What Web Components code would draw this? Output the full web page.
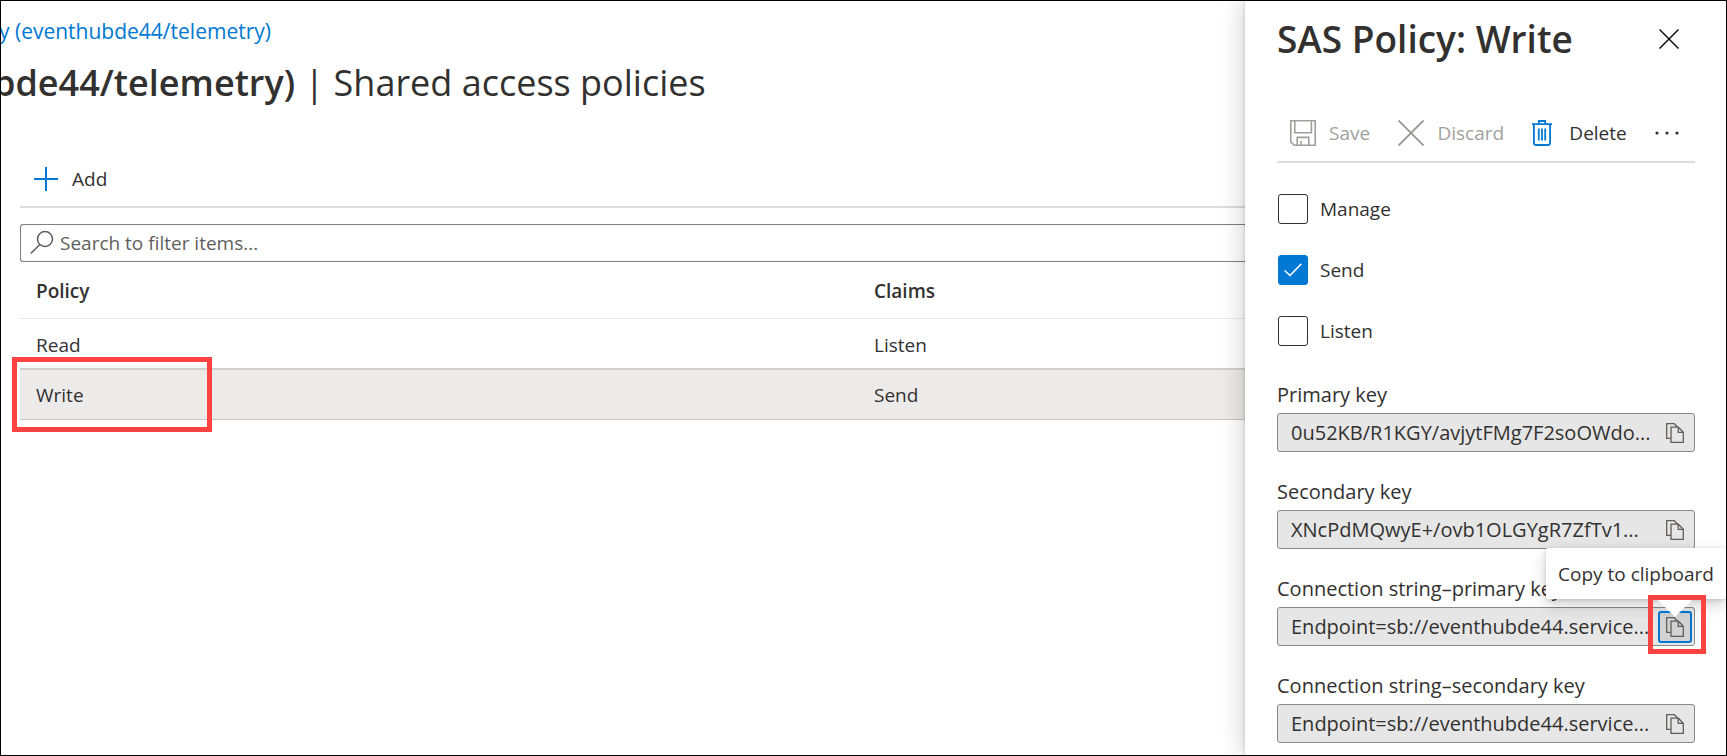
<!DOCTYPE html>
<html lang="en">
<head>
<meta charset="utf-8">
<title>Shared access policies</title>
<style>
  html, body { margin: 0; }
  body { font: 19px/28px "Open Sans", "Noto Sans", sans-serif; color: #323130; background: #fff; }
</style>
</head>
<body>
<portal-frame>
  <policy-list slot="main"></policy-list>
  <policy-panel slot="panel" heading="SAS Policy: Write">
    <claim-check label="Manage"></claim-check>
    <claim-check label="Send" checked></claim-check>
    <claim-check label="Listen"></claim-check>
    <key-field slot="keys" label="Primary key" value="0u52KB/R1KGY/avjytFMg7F2soOWdo..."></key-field>
    <key-field slot="keys" label="Secondary key" value="XNcPdMQwyE+/ovb1OLGYgR7ZfTv1..."></key-field>
    <key-field slot="keys" label="Connection string–primary key" value="Endpoint=sb://eventhubde44.service..." active></key-field>
    <key-field slot="keys" label="Connection string–secondary key" value="Endpoint=sb://eventhubde44.service..."></key-field>
  </policy-panel>
</portal-frame>

<script>
class BaseElement extends HTMLElement {
  connectedCallback() {
    if (this.shadowRoot) return;
    this.attachShadow({ mode: "open" }).innerHTML = this.render();
  }
}

customElements.define("portal-frame", class extends BaseElement {
  render() {
    return `<style>
      :host { display: grid; grid-template-columns: minmax(0, 1fr) 481px; box-sizing: border-box; min-height: 100vh; border: 1px solid #000; overflow: hidden; }
    </style><slot name="main"></slot><slot name="panel"></slot>`;
  }
});

/* Red outline drawn round the thing the reader should look at. */
customElements.define("call-out", class extends BaseElement {
  render() {
    return `<style>:host { display: block; position: absolute; box-sizing: border-box; border: 5px solid #ff4343; pointer-events: none; }</style>`;
  }
});

customElements.define("policy-list", class extends BaseElement {
  render() {
    return `<style>
      :host { display: block; overflow: hidden; padding: 16px 0 0; }
      nav { white-space: nowrap; margin-left: -2px; font-size: 21px; }
      a { color: #0078d4; text-decoration: none; }
      h1 { margin: 12px 0 41px -8px; font-size: 36px; line-height: 52px; font-weight: 400; white-space: nowrap; }
      h1 b { font-weight: 600; }
      .body { margin-left: 19px; }
      .bar { display: flex; box-sizing: border-box; height: 58px; padding-top: 2px; border-bottom: 2px solid #dcdcdc; }
      button { display: flex; align-items: center; gap: 14px; padding: 0 14px; border: 0; background: none; font: inherit; color: inherit; }
      .search { display: flex; align-items: center; gap: 6px; height: 36px; margin-top: 16px; padding-left: 9px; border: 1px solid #807e7c; border-right: 0; border-radius: 3px 0 0 3px; }
      input { flex: 1; min-width: 0; border: 0; outline: 0; padding: 0; font: inherit; color: inherit; background: none; }
      input::placeholder { color: #605e5c; opacity: 1; }
      table { width: 100%; border-collapse: separate; border-spacing: 0; table-layout: fixed; }
      th, td { box-sizing: border-box; padding: 2px 16px 0; text-align: left; font-weight: 400; position: relative; }
      th:first-child { width: 68%; }
      th + th, td + td { padding-left: 21px; }
      th { height: 57px; font-weight: 600; border-bottom: 1px solid #e8e8e8; }
      td { height: 49px; }
      .selected td { height: 52px; padding-top: 0; background: #edebe9; border-top: 2px solid #d2d0ce; border-bottom: 1px solid #c8c6c4; }
      call-out { left: -8px; top: -13px; width: 200px; height: 75px; }
    </style>
    <nav aria-label="Breadcrumb"><a href="#">y (eventhubde44/telemetry)</a></nav>
    <h1><b>bde44/telemetry)</b> | Shared access policies</h1>
    <div class="body">
      <div class="bar"><button type="button">
        <svg width="24" height="24" viewBox="0 0 24 24" fill="none" stroke="#0078d4" stroke-width="2"><path d="M12 0v24M0 12h24"/></svg>Add</button></div>
      <label class="search">
        <svg width="24" height="26" viewBox="0 0 24 26" fill="none" stroke="#605e5c" stroke-width="1.5"><circle cx="15" cy="9" r="7.5"/><path d="M9.8 14.5L.8 23.5"/></svg>
        <input type="text" aria-label="Filter items" placeholder="Search to filter items...">
      </label>
      <table>
        <thead><tr><th scope="col">Policy</th><th scope="col">Claims</th></tr></thead>
        <tbody>
          <tr><td>Read</td><td>Listen</td></tr>
          <tr class="selected"><td>Write<call-out></call-out></td><td>Send</td></tr>
        </tbody>
      </table>
    </div>`;
  }
});

customElements.define("policy-panel", class extends BaseElement {
  render() {
    return `<style>
      :host { display: block; position: relative; background: #fff; padding: 12px 31px 12px 32px; box-shadow: 0 0 24px rgba(0,0,0,.22), 0 0 4px rgba(0,0,0,.16); }
      header { display: flex; justify-content: space-between; align-items: center; }
      h2 { margin: 0; font-size: 37px; line-height: 52px; font-weight: 600; white-space: nowrap; }
      button { display: flex; align-items: center; border: 0; padding: 0; background: none; font: inherit; color: inherit; }
      .close { padding: 8px 16px; }
      .bar { display: flex; justify-content: space-between; box-sizing: border-box; height: 60px; margin-top: 38px; padding: 2px 16px 0 13px; border-bottom: 2px solid #dcdcdc; }
      .bar button { gap: 13px; }
      button:disabled { color: #a19f9d; }
      .claims { display: grid; gap: 31px; margin-top: 31px; }
      .keys { display: grid; gap: 26px; margin-top: 35px; }
    </style>
    <header><h2>${this.getAttribute("heading")}</h2>
      <button class="close" type="button" aria-label="Close"><svg width="20" height="20" viewBox="0 0 20 20" stroke="#111" stroke-width="1.5"><path d="M.5.5l19 19M19.5.5l-19 19"/></svg></button></header>
    <div class="bar">
      <button type="button" disabled><svg width="26" height="26" viewBox="0 0 26 26" fill="none" stroke="#a19f9d" stroke-width="1.6"><path d="M.8.8h24.4v24.4H4.2L.8 22zM4.8.8v12h16.6V.8M7.2 25v-7.6h11.6V25M11 25v-4"/></svg>Save</button>
      <button type="button" disabled><svg width="26" height="26" viewBox="0 0 26 26" stroke="#979593" stroke-width="1.8"><path d="M.5.5l25 25M25.5.5l-25 25"/></svg>Discard</button>
      <button type="button"><svg width="24" height="26" viewBox="0 0 24 26" fill="none" stroke="#0078d4" stroke-width="1.8"><path d="M0 4.2h20M6.8 4V1h6.4v3M1.9 4.2V22.5q0 2.5 2 2.5h12.2q2 0 2-2.5V4.2M6.8 8.5v12M10 8.5v12M13.2 8.5v12"/></svg>Delete</button>
      <button type="button" aria-label="More"><svg width="24" height="4" viewBox="0 0 24 4" fill="#323130"><circle cx="2" cy="2" r="1.6"/><circle cx="12" cy="2" r="1.6"/><circle cx="22" cy="2" r="1.6"/></svg></button>
    </div>
    <div class="claims"><slot></slot></div>
    <div class="keys"><slot name="keys"></slot></div>`;
  }
});

customElements.define("claim-check", class extends BaseElement {
  render() {
    return `<style>
      :host { display: block; }
      label { display: flex; align-items: center; gap: 12px; height: 30px; }
      .box { display: grid; width: 30px; height: 30px; margin-left: 1px; }
      .box > * { grid-area: 1 / 1; place-self: center; }
      input { appearance: none; box-sizing: border-box; margin: 0; width: 30px; height: 30px; border: 1px solid #323130; border-radius: 3px; background: #fff; }
      input:checked { background: #0078d4; border-color: #0078d4; }
      svg { pointer-events: none; visibility: hidden; }
      input:checked + svg { visibility: visible; }
    </style>
    <label><span class="box"><input type="checkbox"${this.hasAttribute("checked") ? " checked" : ""}>
    <svg width="18" height="14" viewBox="0 0 18 14" fill="none" stroke="#fff" stroke-width="1.6"><path d="M.6 7.5l5.4 5L17.4.8"/></svg></span>
    <span>${this.getAttribute("label")}</span></label>`;
  }
});

customElements.define("tool-tip", class extends BaseElement {
  render() {
    return `<style>
      :host { display: block; position: absolute; right: -34px; bottom: 44px; padding: 12px 12px 11px; background: #fff; border-radius: 2px; box-shadow: 0 6px 16px rgba(0,0,0,.18), 0 1px 4px rgba(0,0,0,.14); font-size: 19px; white-space: nowrap; }
      :host::after { content: ""; position: absolute; right: 33px; top: 100%; border: 18px solid transparent; border-top-color: #fff; border-bottom: 0; }
    </style><slot></slot>`;
  }
});

customElements.define("key-field", class extends BaseElement {
  render() {
    const active = this.hasAttribute("active");
    return `<style>
      :host { display: block; font-size: 20px; }
      label { display: block; margin-bottom: 4px; }
      .field { display: flex; align-items: center; box-sizing: border-box; height: 39px; padding: 0 2px 0 13px; border: 1px solid #8a8886; border-radius: 3px; background: #e6e6e6; }
      input { flex: 1; min-width: 0; border: 0; outline: 0; padding: 0; background: none; font: inherit; color: inherit; }
      .copy { position: relative; }
      button { display: grid; place-items: center; box-sizing: border-box; width: 34px; height: 32px; padding: 0; border: 1px solid transparent; border-radius: 3px; background: none; }
      :host([active]) button { border: 2px solid #0078d4; background: #d2d2d2; }
      call-out { inset: -16px -14px -11px -10px; }
    </style>
    <label for="value">${this.getAttribute("label")}</label>
    <div class="field">
      <input id="value" type="text" readonly value="${this.getAttribute("value")}">
      <div class="copy">
        <button type="button" aria-label="Copy to clipboard"><svg width="18" height="20" viewBox="0 0 18 20" fill="none" stroke="#605e5c" stroke-width="1.3"><path d="M5 15.4H.7V.7h7.6l3 3M5 4.2h7.4l4.9 5v10.1H5zM12.2 4.2v5.2h5"/></svg></button>
        ${active ? `<tool-tip role="tooltip">Copy to clipboard</tool-tip><call-out></call-out>` : ""}
      </div>
    </div>`;
  }
});
</script>
</body>
</html>
